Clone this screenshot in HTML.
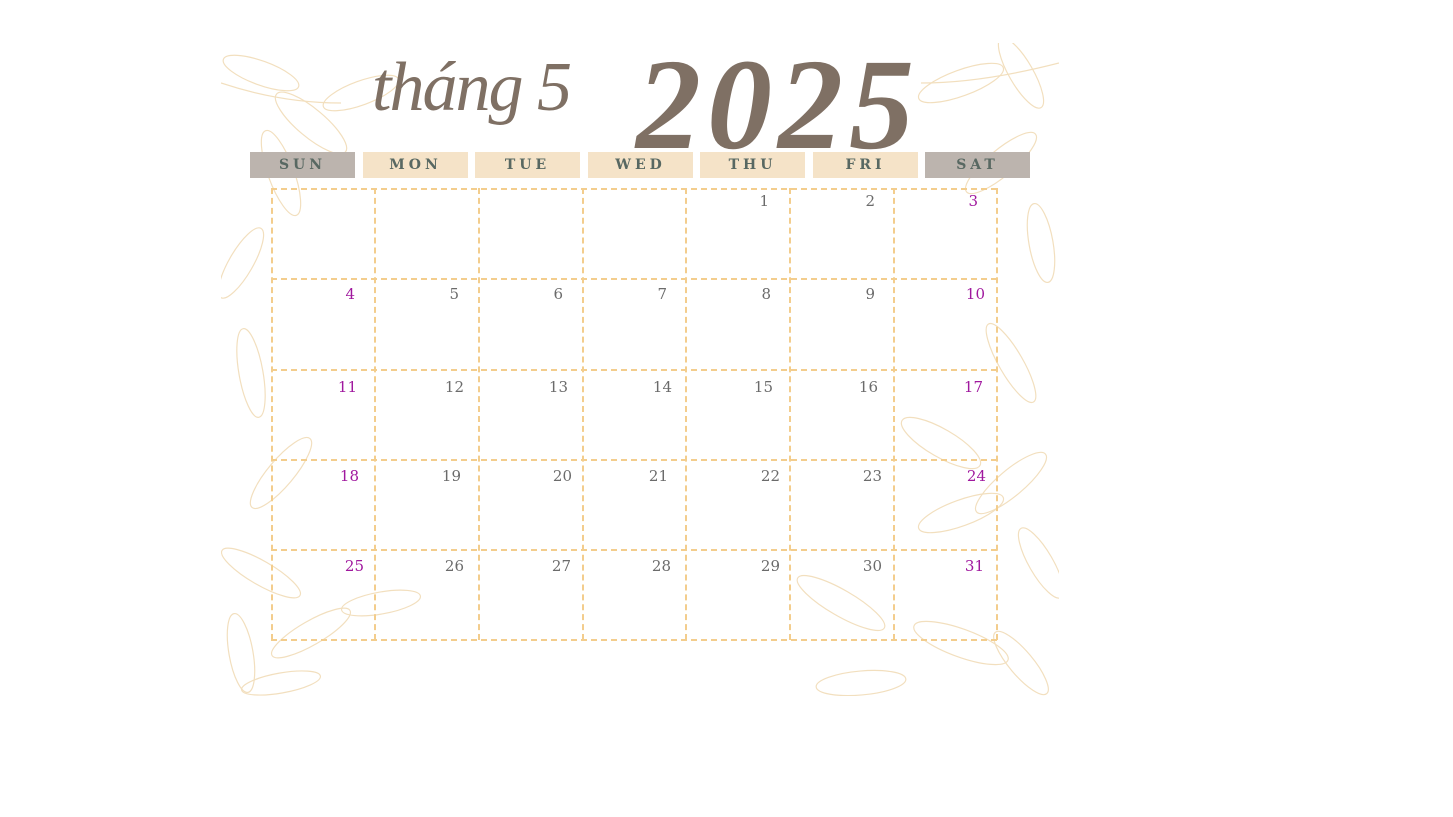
<!DOCTYPE html>
<html><head><meta charset="utf-8"><style>
body{margin:0;width:1453px;height:817px;background:#fff;position:relative;overflow:hidden;font-family:"Liberation Sans",sans-serif}
.bg{position:absolute;left:221px;top:43px;width:838px;height:653px;overflow:hidden}
.hd{position:absolute;top:152px;height:26px;width:105px;font-family:"DejaVu Serif","Liberation Serif",serif;font-weight:bold;font-size:14px;letter-spacing:4px;color:#586862;text-align:center;line-height:26px}
.g{background:#bcb4ae}.b{background:#f5e3c8}
.grid{position:absolute;left:271px;top:188px;width:726px;height:452px}
.vl{position:absolute;top:0;height:452px;border-left:2px dashed #f3cd8d}
.hl{position:absolute;left:0;width:726px;border-top:2px dashed #f3cd8d}
.n{position:absolute;font-family:"DejaVu Serif","Liberation Serif",serif;font-size:15px;color:#6b6b6b;text-align:right;width:40px}
.p{color:#a0189e}
.t{position:absolute;font-family:"Liberation Serif",serif;font-style:italic;color:#7f7064}
</style></head><body>
<div class="bg"><svg width="838" height="653" fill="none" stroke="#f1dcb8" stroke-width="1.2" opacity=".9">
<g><path d="M0 40 Q60 60 120 60"/><ellipse cx="40" cy="30" rx="40" ry="12" transform="rotate(20 40 30)"/><ellipse cx="90" cy="80" rx="45" ry="14" transform="rotate(40 90 80)"/><ellipse cx="140" cy="50" rx="40" ry="12" transform="rotate(-20 140 50)"/><ellipse cx="60" cy="130" rx="45" ry="13" transform="rotate(70 60 130)"/><ellipse cx="20" cy="220" rx="40" ry="12" transform="rotate(-60 20 220)"/><ellipse cx="30" cy="330" rx="45" ry="12" transform="rotate(80 30 330)"/><ellipse cx="60" cy="430" rx="45" ry="13" transform="rotate(-50 60 430)"/><ellipse cx="40" cy="530" rx="45" ry="12" transform="rotate(30 40 530)"/><ellipse cx="20" cy="610" rx="40" ry="12" transform="rotate(80 20 610)"/><ellipse cx="90" cy="590" rx="45" ry="12" transform="rotate(-30 90 590)"/><ellipse cx="160" cy="560" rx="40" ry="11" transform="rotate(-10 160 560)"/><ellipse cx="60" cy="640" rx="40" ry="10" transform="rotate(-10 60 640)"/></g>
<g><path d="M838 20 Q760 40 700 40"/><ellipse cx="740" cy="40" rx="45" ry="13" transform="rotate(-20 740 40)"/><ellipse cx="800" cy="30" rx="40" ry="12" transform="rotate(60 800 30)"/><ellipse cx="780" cy="120" rx="45" ry="13" transform="rotate(-40 780 120)"/><ellipse cx="820" cy="200" rx="40" ry="12" transform="rotate(80 820 200)"/><ellipse cx="790" cy="320" rx="45" ry="12" transform="rotate(60 790 320)"/><ellipse cx="720" cy="400" rx="45" ry="14" transform="rotate(30 720 400)"/><ellipse cx="790" cy="440" rx="45" ry="13" transform="rotate(-40 790 440)"/><ellipse cx="740" cy="470" rx="45" ry="13" transform="rotate(-20 740 470)"/><ellipse cx="820" cy="520" rx="40" ry="12" transform="rotate(60 820 520)"/><ellipse cx="640" cy="640" rx="45" ry="12" transform="rotate(-5 640 640)"/><ellipse cx="740" cy="600" rx="50" ry="14" transform="rotate(20 740 600)"/><ellipse cx="620" cy="560" rx="50" ry="13" transform="rotate(30 620 560)"/><ellipse cx="800" cy="620" rx="40" ry="12" transform="rotate(50 800 620)"/></g>
</svg></div>
<div class="t" style="left:372px;top:48px;font-size:70px;letter-spacing:-2px">tháng 5</div>
<div class="t" style="left:636px;top:30px;font-size:130px;font-weight:bold;letter-spacing:6px">2025</div>
<div class="hd g" style="left:250px">SUN</div>
<div class="hd b" style="left:363px">MON</div>
<div class="hd b" style="left:475px">TUE</div>
<div class="hd b" style="left:588px">WED</div>
<div class="hd b" style="left:700px">THU</div>
<div class="hd b" style="left:813px">FRI</div>
<div class="hd g" style="left:925px">SAT</div>
<div class="grid">
<div class="vl" style="left:0"></div><div class="vl" style="left:103px"></div><div class="vl" style="left:207px"></div><div class="vl" style="left:311px"></div><div class="vl" style="left:414px"></div><div class="vl" style="left:518px"></div><div class="vl" style="left:622px"></div><div class="vl" style="left:725px"></div>
<div class="hl" style="top:0"></div><div class="hl" style="top:90px"></div><div class="hl" style="top:181px"></div><div class="hl" style="top:271px"></div><div class="hl" style="top:361px"></div><div class="hl" style="top:451px"></div>
</div>
<div class="n" style="left:729px;top:192px">1</div><div class="n" style="left:835px;top:192px">2</div><div class="n p" style="left:938px;top:192px">3</div>
<div class="n p" style="left:315px;top:285px">4</div><div class="n" style="left:419px;top:285px">5</div><div class="n" style="left:523px;top:285px">6</div><div class="n" style="left:627px;top:285px">7</div><div class="n" style="left:731px;top:285px">8</div><div class="n" style="left:835px;top:285px">9</div><div class="n p" style="left:945px;top:285px">10</div>
<div class="n p" style="left:317px;top:378px">11</div><div class="n" style="left:424px;top:378px">12</div><div class="n" style="left:528px;top:378px">13</div><div class="n" style="left:632px;top:378px">14</div><div class="n" style="left:733px;top:378px">15</div><div class="n" style="left:838px;top:378px">16</div><div class="n p" style="left:943px;top:378px">17</div>
<div class="n p" style="left:319px;top:467px">18</div><div class="n" style="left:421px;top:467px">19</div><div class="n" style="left:532px;top:467px">20</div><div class="n" style="left:628px;top:467px">21</div><div class="n" style="left:740px;top:467px">22</div><div class="n" style="left:842px;top:467px">23</div><div class="n p" style="left:946px;top:467px">24</div>
<div class="n p" style="left:324px;top:557px">25</div><div class="n" style="left:424px;top:557px">26</div><div class="n" style="left:531px;top:557px">27</div><div class="n" style="left:631px;top:557px">28</div><div class="n" style="left:740px;top:557px">29</div><div class="n" style="left:842px;top:557px">30</div><div class="n p" style="left:944px;top:557px">31</div>
</body></html>
